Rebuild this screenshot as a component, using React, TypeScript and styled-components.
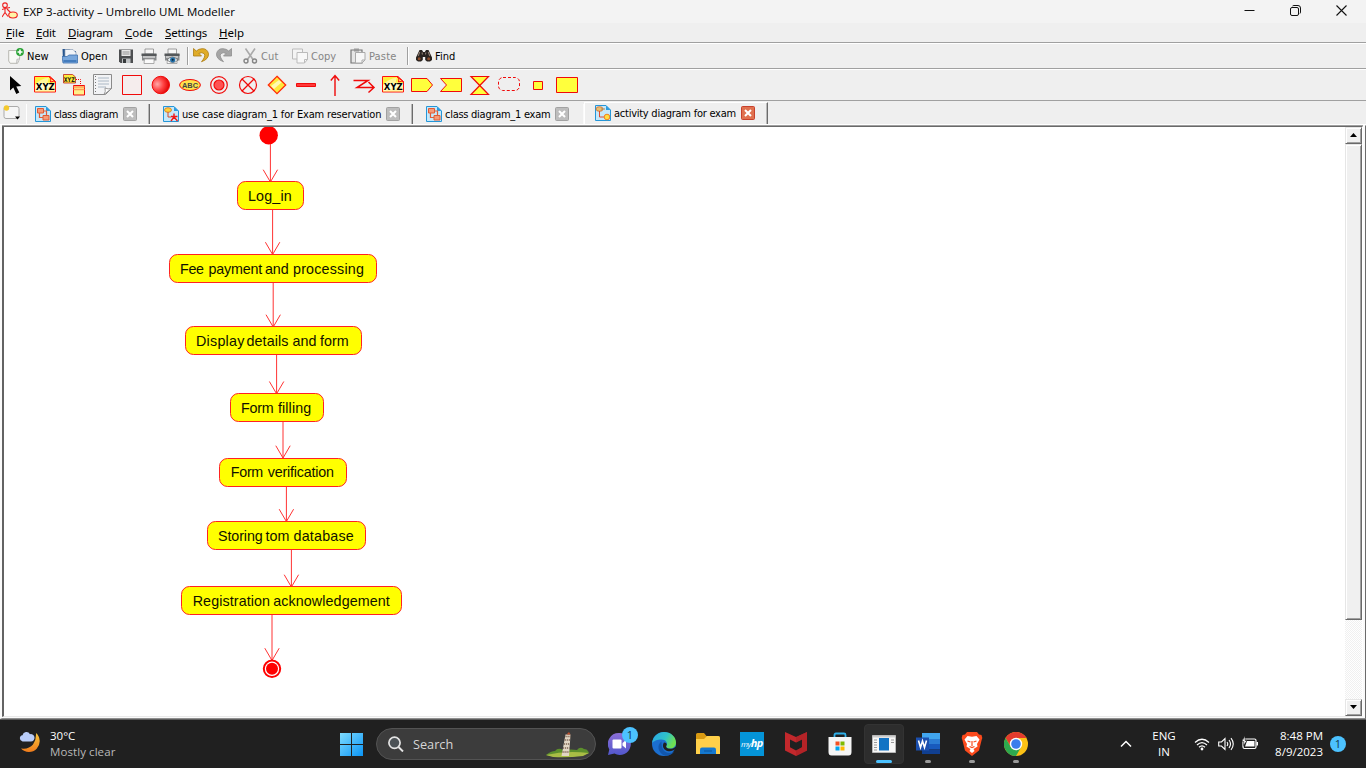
import React from "react";
import styled, { createGlobalStyle, css } from "styled-components";

const GlobalStyle = createGlobalStyle`
  html, body { margin: 0; padding: 0; overflow: hidden; background: #202020; }
  * { box-sizing: border-box; }
  svg { display: block; flex: none; }
`;

const ui = `"DejaVu Sans Condensed", "DejaVu Sans", sans-serif`;
const menuFont = `"Noto Sans", "DejaVu Sans Condensed", sans-serif`;
const segoe = `"Open Sans", "Noto Sans", sans-serif`;

const Screen = styled.div`
  width: 1366px;
  height: 768px;
  display: flex;
  flex-direction: column;
  overflow: hidden;
`;

const Window = styled.div`
  height: 720px;
  display: flex;
  flex-direction: column;
  background: #efefef;
  color: #000;
  font: 11px/14px ${ui};
  border-bottom: 1px solid #5c5c5c;
`;

const TitleBar = styled.header`
  height: 23px;
  display: flex;
  align-items: center;
  background: #f3f3f3;
  padding: 0 19px 2px 2px;
`;

const Title = styled.span`
  flex: 1;
  padding-left: 5px;
  font: 11.5px/16px ${segoe};
  letter-spacing: 0.03px;
  white-space: nowrap;
  padding-top: 2px;
`;

const Controls = styled.div`
  display: flex;
  gap: 35px;
`;

const Label = styled.span<{ $w: number; $ls?: number; $muted?: boolean }>`
  flex: none;
  width: ${(p) => p.$w}px;
  letter-spacing: ${(p) => p.$ls ?? 0}px;
  color: ${(p) => (p.$muted ? "#858585" : "#000")};
  white-space: nowrap;
`;

const MenuBar = styled.nav`
  height: 21px;
  display: flex;
  gap: 12px;
  padding: 3px 0 0 6px;
  font: 11.5px/14px ${menuFont};
  border-bottom: 1px solid #fff;
  box-shadow: inset 0 -1px 0 #a0a0a0;
  u { text-underline-offset: 1px; text-decoration-thickness: 1px; }
`;

const ToolBar = styled.div`
  height: 26px;
  display: flex;
  align-items: center;
  padding: 0 0 1px 8px;
  border-bottom: 1px solid #fff;
  box-shadow: inset 0 -1px 0 #a0a0a0;
`;

const Tool = styled.div<{ $ml?: number; $gap?: number }>`
  display: flex;
  align-items: center;
  gap: ${(p) => p.$gap ?? 3}px;
  margin-left: ${(p) => p.$ml ?? 0}px;
  & > ${Label} { padding-top: 2px; }
`;

const Divider = styled.i<{ $ml: number }>`
  width: 2px;
  height: 18px;
  margin-left: ${(p) => p.$ml}px;
  background: linear-gradient(90deg, #a0a0a0 50%, #fff 50%);
`;

const ShapeBar = styled.div`
  height: 31px;
  display: flex;
  padding: 4px 0 0 2px;
  border-bottom: 1px solid #a0a0a0;
`;

const ShapeCell = styled.div`
  width: 29px;
  padding-left: 3px;
`;

const Tabs = styled.div`
  height: 24px;
  display: flex;
  align-items: stretch;
  padding-left: 3px;
  border-bottom: 1px solid #fff;
`;

const NewTab = styled.div`
  width: 23px;
  padding-top: 4px;
`;

const Tab = styled.div<{ $w: number; $pl: number; $active?: boolean; $first?: boolean; $end?: "dark" | "light" }>`
  width: ${(p) => p.$w}px;
  height: 20px;
  margin-top: 3px;
  padding: 2px 0 0 ${(p) => p.$pl}px;
  display: flex;
  align-items: flex-start;
  gap: 3px;
  border-left: 1px solid ${(p) => (p.$first ? "#fff" : "transparent")};
  ${(p) => p.$end === "dark" && css`border-right: 1px solid #6b6b6b; box-shadow: inset -1px 0 0 #b8b8b8;`}
  ${(p) => p.$end === "light" && css`border-right: 1px solid #fafafa;`}
  ${(p) =>
    p.$active &&
    css`
      height: 22px;
      margin-top: 1px;
      padding-top: 2px;
      border-top: 1px solid #fff;
      border-left-color: #fff;
    `}
  & > span { margin-top: 2px; }
`;

const TabClose = styled.i<{ $active?: boolean }>`
  width: 14px;
  height: 14px;
  margin: ${(p) => (p.$active ? 1 : 1)}px 0 0 2px;
  display: block;
  border-radius: 1.5px;
  border: 1px solid ${(p) => (p.$active ? "#c8402c" : "#a2a2a2")};
  background: ${(p) => (p.$active ? "#e0714f" : "#bdbdbd")};
`;

const Frame = styled.div`
  flex: 1;
  display: flex;
  padding-bottom: 1px;
  background: #fafafa;
  border: solid;
  border-width: 1px 1px 1px 2px;
  border-color: #fafafa #6b6b6b #8f8f8f #fafafa;
`;

const Sunken = styled.div`
  flex: 1;
  display: flex;
  border: solid;
  border-width: 1px 1px 1px 2px;
  border-color: #696969 #fff #e9e9e9 #636363;
  box-shadow: 0 -1px 0 #a0a0a0;
  margin-right: 2px;
  background: #fff;
`;

const Canvas = styled.main`
  flex: 1;
  position: relative;
  overflow: hidden;
  background: #fff;
`;

const Links = styled.svg`
  position: absolute;
  left: 0;
  top: 0;
`;

const Activity = styled.div<{ $x: number; $y: number; $w: number; $drop?: number }>`
  position: absolute;
  left: ${(p) => p.$x}px;
  top: ${(p) => p.$y}px;
  width: ${(p) => p.$w}px;
  height: 29px;
  padding: ${(p) => p.$drop ?? 0}px 0 0 10.5px;
  display: flex;
  border: 1px solid #f22;
  border-radius: 8.5px;
  background: #ff0;
  color: #111100;
  font: 14.3px/27px "Liberation Sans", Arial, sans-serif;
`;

const Word = styled.span<{ $w: number; $ls: number }>`
  flex: none;
  width: ${(p) => p.$w}px;
  letter-spacing: ${(p) => p.$ls}px;
  white-space: nowrap;
`;

const ScrollBar = styled.div`
  width: 17px;
  display: flex;
  flex-direction: column;
  background: repeating-conic-gradient(#fff 0 25%, #f0f0f0 0 50%) 0 0 / 2px 2px;
`;

const ScrollPart = styled.div<{ $h: number; $push?: boolean }>`
  height: ${(p) => p.$h}px;
  margin-top: ${(p) => (p.$push ? "auto" : 0)};
  padding: 0 1px 1px 0;
  display: flex;
  align-items: center;
  justify-content: center;
  background: #f0f0f0;
  border: 1px solid;
  border-color: #e6e6e6 #696969 #696969 #e6e6e6;
  box-shadow: inset 1px 1px 0 #fff, inset -1px -1px 0 #a0a0a0;
`;

const TaskBar = styled.footer`
  height: 48px;
  display: flex;
  align-items: center;
  background: #202020;
  color: #fff;
  font: 11.5px/16px ${segoe};
`;

const Weather = styled.div`
  width: 330px;
  padding-left: 18px;
  display: flex;
  gap: 7px;
`;

const Lines = styled.div<{ $align?: string; $w?: number; $ml?: number }>`
  display: flex;
  flex-direction: column;
  flex: none;
  align-items: ${(p) => p.$align ?? "flex-start"};
  width: ${(p) => (p.$w ? `${p.$w}px` : "auto")};
  margin-left: ${(p) => p.$ml ?? 0}px;
  white-space: nowrap;
`;

const Dim = styled.span`
  color: #b9b9b9;
  letter-spacing: 0.08px;
`;

const Search = styled.div`
  width: 220px;
  height: 32px;
  margin: 0 2px 0 2px;
  padding: 0 5px 0 11px;
  display: flex;
  align-items: center;
  border: 1px solid #535353;
  border-radius: 16px;
  background: #3c3c3c;
  color: #d6d6d6;
  font-size: 12.7px;
`;

const SearchText = styled.span`
  flex: 1;
  padding: 0 0 1px 9px;
`;

const AppButton = styled.div<{ $active?: boolean }>`
  width: 40px;
  height: 40px;
  margin: 0 2px;
  display: flex;
  align-items: center;
  justify-content: center;
  position: relative;
  border-radius: 4px;
  border: 1px solid ${(p) => (p.$active ? "#333" : "transparent")};
  background: ${(p) => (p.$active ? "#2d2d2d" : "transparent")};
`;

const Running = styled.i<{ $active?: boolean }>`
  position: absolute;
  bottom: 0;
  left: 50%;
  transform: translateX(-50%);
  width: ${(p) => (p.$active ? 16 : 6)}px;
  height: 3px;
  border-radius: 2px;
  background: ${(p) => (p.$active ? "#4cc2ff" : "#9a9a9a")};
`;

const Count = styled.b<{ $floating?: boolean }>`
  width: 16px;
  height: 16px;
  border-radius: 50%;
  background: #4cc2ff;
  color: #10384d;
  font: 11px/16px ${segoe};
  text-align: center;
  ${(p) => p.$floating && css`position: absolute; right: 1px; top: 2px;`}
`;

const Tray = styled.div`
  flex: 1;
  display: flex;
  align-items: center;
  padding-left: 82px;
`;

const HpTile = styled.div`
  width: 24px;
  height: 24px;
  background: #0494d8;
  font: italic 8px/22px ${segoe};
  text-align: center;
  letter-spacing: -0.5px;
  b { font-size: 11px; }
`;

const Ico = ({ w = 16, h = 16, children }: { w?: number; h?: number; children: React.ReactNode }) => (
  <svg width={w} height={h} viewBox={`0 0 ${w} ${h}`} fill="none">
    {children}
  </svg>
);

const NewIcon = () => (
  <Ico>
    <path d="M.7 2.5h11.5l-.7 8.500L9.500 15.300H2.200L.7 13z" fill="#f8f8f6" stroke="#aaa9a2" strokeWidth=".8" />
    <path d="M8.500 15.300l.4-4 2.800-.6" fill="#ddd" stroke="#aaa" strokeWidth=".6" />
    <circle cx="12" cy="4" r="3.900" fill="#2aa336" />
    <path d="M12 1.500v5M9.500 4h5" stroke="#fff" strokeWidth="1.600" />
  </Ico>
);
const OpenIcon = () => (
  <Ico>
    <path d="M.5 1h7l2 2H14v11H1z" fill="#27568f" />
    <path d="M3 1.500h8l3 3V10H3z" fill="#f1f4f8" stroke="#8fa1b8" strokeWidth=".7" />
    <path d="M0 8.500h5l2-1.500h8.500v8H1z" fill="#78a7dc" stroke="#3d70ad" strokeWidth=".8" />
    <path d="M1.500 13h13" stroke="#447cbd" strokeWidth="2" />
  </Ico>
);
const SaveIcon = () => (
  <Ico>
    <path d="M1 1.500h14v13.500H2.500L1 13.500z" fill="#4c4e50" />
    <path d="M3.500 2h9v6h-9z" fill="#e9e9e9" />
    <path d="M4.500 4h7M4.500 6h7" stroke="#888" strokeWidth=".9" />
    <path d="M4 10.500h8.500V15H4z" fill="#bfc2c4" />
    <path d="M5 11h3v4H5z" fill="#36393b" />
  </Ico>
);
const Printer = ({ eye }: { eye?: boolean }) => (
  <Ico>
    <path d="M4 1h8.500v5H4z" fill="#f6f6f6" stroke="#888" strokeWidth=".8" />
    <path d="M1 6h14.500v6.500H1z" fill="#86898b" />
    <path d="M.5 5.500h15v2.500H.5z" fill="#55585a" />
    <path d="M2 9h12" stroke="#dfdfdf" strokeWidth="1.400" />
    <path d="M3.500 11h9.500v4.500H3z" fill="#fafafa" stroke="#999" strokeWidth=".8" />
    {eye && (
      <>
        <path d="M3 12q5-6 11 0-5 5-11 0" fill="#e8f2f8" stroke="#666" strokeWidth=".8" />
        <circle cx="8.700" cy="11.800" r="2.600" fill="#246fa8" />
        <circle cx="8.700" cy="11.800" r="1" fill="#0b2435" />
      </>
    )}
  </Ico>
);
const Undo = ({ redo }: { redo?: boolean }) => (
  <Ico>
    <g transform={redo ? "translate(16 0) scale(-1 1)" : undefined}>
      <path
        d="M.5 .5v7.500h8L5.900 5.400Q9 3.800 11.300 5.800 13 8.500 8.500 13.700q7.500-2.500 7-8.200Q14 .3 9 .7 5.600.8 3.300 3z"
        fill={redo ? "#a5a5a5" : "#e0ac28"}
        stroke={redo ? "#8f8f8f" : "#ac7c12"}
        strokeWidth=".8"
      />
    </g>
  </Ico>
);
const CutIcon = () => (
  <Ico w={15}>
    <path d="M2.500.500l7.500 11M12 .5l-7.500 11" stroke="#aaa" strokeWidth="1.600" />
    <circle cx="3" cy="13" r="2" stroke="#858585" strokeWidth="1.400" />
    <circle cx="11.500" cy="13" r="2" stroke="#858585" strokeWidth="1.400" />
  </Ico>
);
const CopyIcon = () => (
  <Ico>
    <path d="M.5 1h10v10h-10z" fill="#f4f4f4" stroke="#bbb" />
    <path d="M5 4.500h10.500v7l-3 3.500H5z" fill="#f8f8f8" stroke="#bbb" />
    <path d="M12.500 15v-3.500h3" stroke="#bbb" />
  </Ico>
);
const PasteIcon = () => (
  <Ico>
    <path d="M1 2h11v13H1z" fill="#e6e6e6" stroke="#777" strokeWidth="1.200" />
    <path d="M4 .5h5v3H4z" fill="#999" />
    <path d="M5.500 4.500h9.500V12l-3 3H5.500z" fill="#f7f7f7" stroke="#aaa" />
    <path d="M12 15v-3h3" stroke="#aaa" />
  </Ico>
);
const FindIcon = () => (
  <Ico>
    <path d="M3.500 2H6l1.200 2h1.600L10 2h2.500L16 9.500V12l-2 1.500h-3L9.200 12V9H6.800v3L5 13.500H2L0 12V9.500z" fill="#28221f" />
    <path d="M3.700 4l-1.500 4M12.300 4l1.500 4M6 4.500l.5 2M9.800 4.500l-.3 2" stroke="#8b7b70" strokeWidth="1.100" />
    <circle cx="3.200" cy="10.800" r="1.500" fill="#8c4c2a" />
    <circle cx="12.700" cy="10.800" r="1.500" fill="#8c4c2a" />
  </Ico>
);

const XyzCard = () => (
  <>
    <path d="M.5 2.500h15.500l5.500 5v10.500H.5z" fill="#ffef3a" stroke="#f11" />
    <path d="M1 17.500V11Q5 5 15 3.500l-1.500 5L21 9v2z" fill="#fff79a" />
    <path d="M2 9.500h19V17.500H2z" fill="#fff" opacity=".55" />
    <path d="M15 2.500q3 2 1.500 5.500 3-1.500 5 0z" fill="#fff36b" stroke="#f11" />
    <text x="11.300" y="16.300" textAnchor="middle" textLength="19" lengthAdjust="spacingAndGlyphs" fontSize="9.500" fontWeight="700" fontFamily="DejaVu Sans" fill="#000">XYZ</text>
  </>
);

const red = "#f00a0a";
const shapes: React.ReactNode[] = [
  <path d="M5 2v14.500l3.300-3 3 6.500 3-1.400-3-6.200 5-.4z" fill="#000" />,
  <XyzCard />,
  <>
    <path d="M.5.500h9l3 2.500v6H.5z" fill="#ffee3a" stroke="#b22" strokeWidth=".8" />
    <text x="6.300" y="8" textAnchor="middle" textLength="11" lengthAdjust="spacingAndGlyphs" fontSize="6.500" fontWeight="700" fontFamily="DejaVu Sans" fill="#221">XYZ</text>
    <path d="M13 5.500h4.500V11" stroke={red} strokeDasharray="1 1" />
    <path d="M10.500 11.500h11v9.500h-11z" fill="#fff08a" stroke={red} />
    <path d="M10.500 13h11M10.500 15.500h11" stroke="#f95" strokeWidth="1.300" />
  </>,
  <>
    <path d="M1.500.500h18v14l-6 6h-12z" fill="#f2f3f5" stroke="#8b8b8b" />
    <path d="M6 4h11M6 7h11M6 10h11M6 13h8" stroke="#9aa8b9" strokeWidth=".8" />
    <path d="M3.500 2v18" stroke="#777" strokeDasharray="1 2" />
    <path d="M12 20.500q2-3 1-6.500 3 1.500 6.500.500z" fill="#fff" stroke="#888" strokeWidth=".8" />
  </>,
  <path d="M1.500 1.500h19v19h-19z" fill="#f5eded" stroke={red} />,
  <>
    <defs>
      <radialGradient id="ball" cx=".3" cy=".45" r=".7">
        <stop offset="0" stopColor="#ffa8a8" />
        <stop offset=".5" stopColor="#ff4545" />
        <stop offset="1" stopColor="#e00000" />
      </radialGradient>
    </defs>
    <circle cx="10.800" cy="11" r="8.700" fill="url(#ball)" stroke={red} />
  </>,
  <>
    <ellipse cx="11" cy="11" rx="10.400" ry="5.500" fill="#ffe24a" stroke={red} />
    <text x="11" y="13.500" textAnchor="middle" textLength="16" lengthAdjust="spacingAndGlyphs" fontSize="7" fontWeight="700" fontFamily="Liberation Sans" fill="#444">ABC</text>
  </>,
  <>
    <circle cx="11" cy="11" r="8.300" stroke={red} strokeWidth="1.200" />
    <circle cx="11" cy="11" r="5" fill="#ff5252" stroke={red} strokeWidth="1.200" />
  </>,
  <>
    <circle cx="11" cy="11" r="8.500" stroke={red} strokeWidth="1.200" />
    <path d="M5 5l12 12M17 5L5 17" stroke={red} strokeWidth="1.300" />
  </>,
  <>
    <path d="M11 2.300L19.700 11 11 19.700 2.300 11z" fill="#ffe93a" stroke="#ff2a0a" strokeWidth="1.300" />
    <path d="M5 12l8-6 2.500 2.500L8 15z" fill="#fffbb0" />
  </>,
  <path d="M1.500 9.500h19v3h-19z" fill="#ff3a3a" stroke={red} />,
  <path d="M11 22V2M6.800 6.500L11 1.500l4.200 5" stroke={red} strokeWidth="1.400" />,
  <path d="M.5 6.500H15L4 13.500h17M15.500 8l5.500 5.500-5.500 5" stroke={red} strokeWidth="1.500" />,
  <XyzCard />,
  <path d="M.5 4.500h15.500l5.500 6.500-5.500 6.500H.5z" fill="#ffff3c" stroke={red} />,
  <path d="M.5 4.500h21v13H.5l6-6.500z" fill="#ffff3c" stroke={red} />,
  <path d="M2 2.500h17.500L2 20.500h17.500z" fill="#ffff3c" stroke={red} strokeWidth="1.200" />,
  <rect x=".5" y="3.500" width="21" height="13" rx="4.500" stroke={red} strokeDasharray="3 2" />,
  <path d="M6.500 7.500h9v8h-9z" fill="#ffff3c" stroke={red} />,
  <path d="M.5 3.500h21v15H.5z" fill="#ffff3c" stroke={red} />,
];

const DiagramIcon = ({ kind }: { kind: "class" | "use" | "activity" }) => (
  <Ico>
    <path d="M.5.500h10.500l4.500 4.500v10.500H.5z" fill="#c5e8fa" stroke="#2496d8" />
    <path d="M11 .5V5h4.500z" fill="#2c9de0" />
    {kind === "class" && (
      <>
        <path d="M2.500 2.500h6v4.500h-6zM8 9.500h6v4.500H8z" fill="#f59a78" stroke="#e05a35" />
        <path d="M4.500 7v4.500H8M8.500 5h3v4.500" stroke="#e05a35" strokeWidth="1.200" />
      </>
    )}
    {kind === "use" && (
      <>
        <ellipse cx="5" cy="4" rx="3.500" ry="2.300" fill="#ffd23a" stroke="#d0701c" strokeWidth=".8" />
        <path d="M5 6v5h3" stroke="#d84a2a" />
        <path d="M11 7.500v4M8 10.500h6.500M11 11l-3 4M11 11l3.500 4" stroke="#f01818" strokeWidth="1.400" />
      </>
    )}
    {kind === "activity" && (
      <>
        <ellipse cx="4.500" cy="4" rx="3.500" ry="2.300" fill="#e8c070" stroke="#d06a30" strokeWidth=".8" />
        <path d="M4.500 6v6H9" stroke="#e04a30" />
        <circle cx="12" cy="12" r="2.800" fill="#ffdf40" stroke="#f08020" />
        <path d="M6 4h4" stroke="#a85" />
      </>
    )}
  </Ico>
);

const Close = ({ active }: { active?: boolean }) => (
  <TabClose $active={active}>
    <Ico w={12} h={12}>
      <path d="M3 3l6 6M9 3L3 9" stroke="#fff" strokeWidth="2" />
    </Ico>
  </TabClose>
);

type W = [text: string, width: number, spacing: number];
const activities: { x: number; y: number; w: number; drop?: number; words: W[] }[] = [
  { x: 236.5, y: 181.4, w: 67.5, drop: 1, words: [["Log_in", 44, 0.15]] },
  { x: 168.5, y: 254.3, w: 208, drop: 1, words: [["Fee", 28.5, -0.3], ["payment", 56.5, -0.2], ["and", 28, -0.1], ["processing", 70, 0.2]] },
  { x: 184.5, y: 326.4, w: 177, drop: 1, words: [["Display", 50.5, 0.25], ["details", 46, 0.1], ["and", 27.5, 0], ["form", 28, 0]] },
  { x: 229.5, y: 393.3, w: 94, drop: 1, words: [["Form", 37, -0.2], ["filling", 33, 0.1]] },
  { x: 219.3, y: 457.6, w: 127.4, words: [["Form", 37, -0.3], ["verification", 66, -0.2]] },
  { x: 206.5, y: 521, w: 159.5, drop: 1, words: [["Storing", 47.5, -0.1], ["tom", 28, 0], ["database", 60, 0.2]] },
  { x: 181.2, y: 586.4, w: 220.6, drop: 1, words: [["Registration", 80.5, 0.1], ["acknowledgement", 117, 0.1]] },
];

const arrows: [x: number, from: number, to: number][] = [
  [270.4, 144, 182],
  [272.6, 210, 254.5],
  [273.2, 283, 327],
  [276.6, 355, 393.8],
  [283, 422, 458],
  [286.4, 486.5, 521.5],
  [291.4, 550, 587],
  [272, 615, 660.5],
];

export default function App() {
  return (
    <Screen>
      <GlobalStyle />
      <Window>
        <TitleBar>
          <Ico w={16} h={17}>
            <circle cx="3" cy="3.200" r="2.300" stroke="#e22" strokeWidth="1.100" />
            <path d="M3 5.500v5M0 7.500l3-1 5-1M0 15l3-4.500 3 4M5 7l4 4" stroke="#e22" strokeWidth="1.100" />
            <ellipse cx="11" cy="13" rx="4.300" ry="3" fill="#fff5a8" stroke="#e22" strokeWidth="1.100" />
          </Ico>
          <Title>EXP 3-activity – Umbrello UML Modeller</Title>
          <Controls>
            <Ico w={11} h={11}><path d="M.5 5.500h10" stroke="#111" /></Ico>
            <Ico w={11} h={11}>
              <rect x=".5" y="2.500" width="8" height="8" rx="1.500" stroke="#111" />
              <path d="M2.500 1q.5-.5 1.500-.5h4q2.500 0 2.500 2.500v4q0 1-.5 1.500" stroke="#111" />
            </Ico>
            <Ico w={11} h={11}><path d="M.5.500l10 10M10.500.500l-10 10" stroke="#111" strokeWidth="1.100" /></Ico>
          </Controls>
        </TitleBar>
        <MenuBar>
          <Label $w={18}><u>F</u>ile</Label>
          <Label $w={20} $ls={-0.2}><u>E</u>dit</Label>
          <Label $w={45} $ls={-0.25}><u>D</u>iagram</Label>
          <Label $w={28}><u>C</u>ode</Label>
          <Label $w={42} $ls={-0.2}><u>S</u>ettings</Label>
          <Label $w={26}><u>H</u>elp</Label>
        </MenuBar>
        <ToolBar>
          <Tool><NewIcon /><Label $w={21}>New</Label></Tool>
          <Tool $ml={14} $gap={3}><OpenIcon /><Label $w={26}>Open</Label></Tool>
          <Tool $ml={11} $gap={7}><SaveIcon /><Printer /><Printer eye /></Tool>
          <Divider $ml={7} />
          <Tool $ml={4} $gap={7}><Undo /><Undo redo /></Tool>
          <Tool $ml={11}><CutIcon /><Label $w={18} $ls={0.2} $muted>Cut</Label></Tool>
          <Tool $ml={13}><CopyIcon /><Label $w={25} $muted>Copy</Label></Tool>
          <Tool $ml={14}><PasteIcon /><Label $w={28} $ls={0.15} $muted>Paste</Label></Tool>
          <Divider $ml={10} />
          <Tool $ml={7}><FindIcon /><Label $w={21}>Find</Label></Tool>
        </ToolBar>
        <ShapeBar>
          {shapes.map((s, i) => (
            <ShapeCell key={i}><Ico w={23} h={23}>{s}</Ico></ShapeCell>
          ))}
        </ShapeBar>
        <Tabs>
          <NewTab>
            <Ico w={19} h={17}>
              <rect x="1" y="1.500" width="15" height="12" rx="2" fill="#f6f6f6" stroke="#aaa" />
              <circle cx="3.500" cy="3" r="2.700" fill="#f4c92c" />
              <path d="M12 11.500h5l-2.500 3z" fill="#000" />
            </Ico>
          </NewTab>
          <Tab $w={124} $pl={8} $first $end="dark">
            <DiagramIcon kind="class" /><Label $w={64} $ls={-0.38}>class diagram</Label><Close />
          </Tab>
          <Tab $w={263} $pl={12} $end="dark">
            <DiagramIcon kind="use" /><Label $w={199} $ls={-0.17}>use case diagram_1 for Exam reservation</Label><Close />
          </Tab>
          <Tab $w={171} $pl={12} $end="light">
            <DiagramIcon kind="class" /><Label $w={105} $ls={-0.27}>class diagram_1 exam</Label><Close />
          </Tab>
          <Tab $w={184} $pl={10} $active $end="dark">
            <DiagramIcon kind="activity" /><Label $w={122} $ls={-0.25}>activity diagram for exam</Label><Close active />
          </Tab>
        </Tabs>
        <Frame>
          <Sunken>
            <Canvas>
              <Links width="1341" height="590" viewBox="4 127 1341 590" fill="none" stroke="#f33">
                <circle cx="268.700" cy="135.300" r="9.200" fill="#f00" stroke="none" />
                {arrows.map(([x, from, to]) => (
                  <path key={from} d={`M${x} ${from}V${to}M${x - 7.2} ${to - 12.3}L${x} ${to}L${x + 7.2} ${to - 12.3}`} />
                ))}
                <circle cx="272" cy="668.800" r="8.200" stroke="#f00" strokeWidth="2" fill="#fff" />
                <circle cx="272" cy="668.800" r="6" fill="#f00" stroke="none" />
              </Links>
              {activities.map((a) => (
                <Activity key={a.y} $x={a.x - 4} $y={a.y - 127} $w={a.w} $drop={a.drop}>
                  {a.words.map(([t, w, ls]) => (
                    <Word key={t} $w={w} $ls={ls}>{t}</Word>
                  ))}
                </Activity>
              ))}
            </Canvas>
            <ScrollBar>
              <ScrollPart $h={17}><Ico w={7} h={4}><path d="M0 4h7L3.500 0z" fill="#000" /></Ico></ScrollPart>
              <ScrollPart $h={476} />
              <ScrollPart $h={17} $push><Ico w={7} h={4}><path d="M0 0h7L3.500 4z" fill="#000" /></Ico></ScrollPart>
            </ScrollBar>
          </Sunken>
        </Frame>
      </Window>
      <TaskBar>
        <Weather>
          <Ico w={25} h={32}>
            <defs>
              <linearGradient id="moon" x1="0" y1="0" x2="0" y2="1">
                <stop offset="0" stopColor="#f8c63c" />
                <stop offset="1" stopColor="#f07c1c" />
              </linearGradient>
            </defs>
            <path d="M18 5a10.800 10.800 0 1 1-15 15.500q8 1 12-4 3.500-5 3-11.500z" fill="url(#moon)" />
            <path d="M4.500 13.500a3.200 3.200 0 0 1 0-6.300 4 4 0 0 1 7.500-1 3.700 3.700 0 1 1 1 7.300z" fill="#b9cdfa" />
          </Ico>
          <Lines>
            <span>30°C</span>
            <Dim>Mostly clear</Dim>
          </Lines>
        </Weather>
        <AppButton>
          <Ico w={24} h={24}>
            <defs>
              <linearGradient id="win" x1="0" y1="0" x2="1" y2="1">
                <stop offset="0" stopColor="#7fdcff" />
                <stop offset="1" stopColor="#0a94f5" />
              </linearGradient>
            </defs>
            <path d="M0 1h11v11H0zM12 1h11v11h-11zM0 13h11v11H0zM12 13h11v11h-11z" fill="url(#win)" />
          </Ico>
        </AppButton>
        <Search>
          <Ico>
            <circle cx="6.500" cy="6.800" r="5.600" stroke="#e4e4e4" strokeWidth="1.700" fill="#4c5256" />
            <path d="M10.500 11l4.500 4.500" stroke="#e4e4e4" strokeWidth="1.900" />
          </Ico>
          <SearchText>Search</SearchText>
          <Ico w={45} h={28}>
            <path d="M1 25q5-4 9-4 3-4 8-1 9-1 14 0 3-4 7-1 3 0 4 2l1 2q-8 3-22 4-13 0-21-2z" fill="#5c8f2c" />
            <path d="M1 25q20-5 43-2l-6 3q-16 2-30 1z" fill="#a9bd45" />
            <path d="M20.500 4.500h5L24 26h-7.500z" fill="#e2d6c4" />
            <path d="M20.500 6.500h5M19.700 10h5.500M19 14h6M18 18h6.500M17.500 22h6.500" stroke="#7b6150" strokeWidth="1.300" strokeDasharray="1.200 .8" />
            <path d="M21.500 4.500L24 2l1.500 2.500z" fill="#c0502c" />
          </Ico>
        </Search>
        <AppButton>
          <Ico w={24} h={24}>
            <defs>
              <linearGradient id="chat" x1="0" y1="0" x2="0" y2="1">
                <stop offset="0" stopColor="#8c6fd6" />
                <stop offset="1" stopColor="#5257cc" />
              </linearGradient>
            </defs>
            <path d="M11 1a11 11 0 1 1-4.500 20.600L0 23l1.300-5.500A11 11 0 0 1 11 1z" fill="url(#chat)" />
            <rect x="4.500" y="7.500" width="9" height="9" rx="1" fill="#fff" />
            <path d="M14.500 11l3.500-3v8.500l-3.500-3z" fill="#fff" />
          </Ico>
          <Count $floating>1</Count>
        </AppButton>
        <AppButton>
          <Ico w={24} h={24}>
            <defs>
              <linearGradient id="edgeTop" x1="0" y1="0" x2="1" y2=".4">
                <stop offset="0" stopColor="#2aa5e6" />
                <stop offset=".6" stopColor="#2fc3c8" />
                <stop offset="1" stopColor="#6fe052" />
              </linearGradient>
            </defs>
            <circle cx="12" cy="12" r="12" fill="#1b6fd0" />
            <path d="M0 11.500C1 4 6 0 12 0c7 0 12 5 12 10.500 0 4-3 6-6 6-3.500 0-4.500-1.500-3.500-3 1.500-3-1-6-5-6S1 9 0 11.500z" fill="url(#edgeTop)" />
            <path d="M9.500 9.500c-5 3-4 12 4 14.300 4 0 6.500-1.500 8.500-4-6 3-13 .5-12.500-10.300z" fill="#1257ad" />
            <path d="M12 10.500c-2.500 3-.5 8 4.500 8.700 3 .3 5-.7 7-2.200L24 20l1-6-4 2.500q-5 1-6.500-1-.8-1 .2-2.500.3-2.500-2.700-2.500z" fill="#202020" />
          </Ico>
        </AppButton>
        <AppButton>
          <Ico w={24} h={24}>
            <path d="M0 2.500Q0 1 1.500 1H8l2.500 3H22q2 0 2 2v5H0z" fill="#d99a12" />
            <path d="M0 7h8l3-3h11q2 0 2 2v16H0z" fill="#ffd04a" />
            <path d="M4 22v-4.500q0-2 2-2h12q2 0 2 2V22z" fill="#1478cf" />
            <path d="M8 19h8" stroke="#0a529b" />
          </Ico>
        </AppButton>
        <AppButton><HpTile>my<b>hp</b></HpTile></AppButton>
        <AppButton>
          <Ico w={24} h={24}>
            <path d="M1 0l11 5 11-5v18.500L12 24 1 18.500z" fill="#c2282c" />
            <path d="M6 7.500l6 3 6-3v7.800L12 18.500 6 15.300z" fill="#202020" />
            <path d="M12 5l11-5v18.500L12 24v-5.500l6-3.200V7.500l-6 3z" fill="#a92024" opacity=".6" />
          </Ico>
        </AppButton>
        <AppButton>
          <Ico w={24} h={24}>
            <path d="M6.500 6V3q0-1.500 1.500-1.500h8q1.500 0 1.500 1.500v3" stroke="#2fb0ea" strokeWidth="1.800" />
            <path d="M.5 5h23v15q0 3.500-3 3.500H3.500q-3 0-3-3.500z" fill="#f5f5f5" />
            <path d="M7.500 9.500h4v4h-4z" fill="#f25022" />
            <path d="M12.500 9.500h4v4h-4z" fill="#7fba00" />
            <path d="M7.500 14.500h4v4h-4z" fill="#00a4ef" />
            <path d="M12.500 14.500h4v4h-4z" fill="#ffb900" />
          </Ico>
        </AppButton>
        <AppButton $active>
          <Ico w={24} h={24}>
            <path d="M.5 3.500h23v17H.5z" fill="#f7f7f7" stroke="#b9b9b9" />
            <path d="M1 4h22v1.500H1z" fill="#ccc" />
            <path d="M2 8h3M2 10.500h3M2 13h3M2 15.500h3M2 18h3M19 8h3M19 10.500h3" stroke="#999" />
            <path d="M7 6h10v12.500H7z" fill="#1273c4" />
          </Ico>
          <Running $active />
        </AppButton>
        <AppButton>
          <Ico w={24} h={24}>
            <path d="M6 1h18v6H6z" fill="#41a5ee" />
            <path d="M6 7h18v5H6z" fill="#2b7cd3" />
            <path d="M6 12h18v5.500H6z" fill="#185abd" />
            <path d="M6 17.500h18V22H6z" fill="#103f91" />
            <path d="M0 5.500h13v13H0z" fill="#1b4fae" />
            <path d="M2.500 8.500l2 7 2-6.500 2 6.500 2-7" stroke="#fff" strokeWidth="1.600" />
          </Ico>
          <Running />
        </AppButton>
        <AppButton>
          <Ico w={24} h={24}>
            <path d="M7 0h10l2 2.500L21.500 3l.8 3-.8 2.500-2.500 10L12 24l-7-5.500-2.500-10L1.700 6l.8-3L5 2.500z" fill="#fb4a1c" />
            <path d="M7.500 4l4.500.8 4.500-.8 3 3.500-2.500 4.500.5 2.500-4 2.500 1 2-2.500 2-2.500-2 1-2-4-2.500.5-2.500L4.500 7.500z" fill="#fff" />
            <path d="M7.500 9l3 1M16.500 9l-3 1M12 9v5M9.500 14.500l2.500 1 2.500-1" stroke="#fb4a1c" strokeWidth="1.200" />
          </Ico>
          <Running />
        </AppButton>
        <AppButton>
          <Ico w={24} h={24}>
            <circle cx="12" cy="12" r="12" fill="#fbc116" />
            <path d="M12 12V6h10.400A12 12 0 0 0 1.600 6L7 15z" fill="#e33b2e" />
            <path d="M1.600 6A12 12 0 0 0 12 24l5.200-9L12 12 6.800 15z" fill="#2da94f" />
            <circle cx="12" cy="12" r="6.200" fill="#fff" />
            <circle cx="12" cy="12" r="4.800" fill="#3b7ded" />
          </Ico>
          <Running />
        </AppButton>
        <Tray>
          <Ico w={12} h={8}><path d="M1 6.500l5-5 5 5" stroke="#fff" strokeWidth="1.500" /></Ico>
          <Lines $ml={18} $w={28} $align="center"><span>ENG</span><span>IN</span></Lines>
          <Tool $ml={16} $gap={8}>
            <Ico>
              <path d="M1 6.500q7-6.500 14 0M3 9q5-4.700 10 0M5 11.300q3-2.800 6 0" stroke="#fff" strokeWidth="1.200" />
              <circle cx="8" cy="13" r="1.400" fill="#fff" />
            </Ico>
            <Ico>
              <path d="M.7 6h2.800L7 2.500v11L3.500 10H.7z" stroke="#fff" strokeWidth="1.100" />
              <path d="M9 6q1.500 2 0 4M11 4q3 4 0 8M13 2.200q4.500 5.800 0 11.600" stroke="#fff" strokeWidth="1.100" />
            </Ico>
            <Ico>
              <rect x="1" y="3" width="13" height="9.500" rx="1.500" stroke="#fff" strokeWidth="1.200" />
              <path d="M5 5h7.500v5.500H3z" fill="#fff" />
              <path d="M14.500 6h1.500v3.500h-1.500z" fill="#fff" />
              <path d="M3 0L0 5.500h2l-.5 4L5 4.500H3z" fill="#fff" stroke="#202020" strokeWidth=".5" />
            </Ico>
          </Tool>
          <Lines $ml={14} $w={51} $align="flex-end"><span>8:48 PM</span><span>8/9/2023</span></Lines>
          <Tool $ml={7}><Count>1</Count></Tool>
        </Tray>
      </TaskBar>
    </Screen>
  );
}
